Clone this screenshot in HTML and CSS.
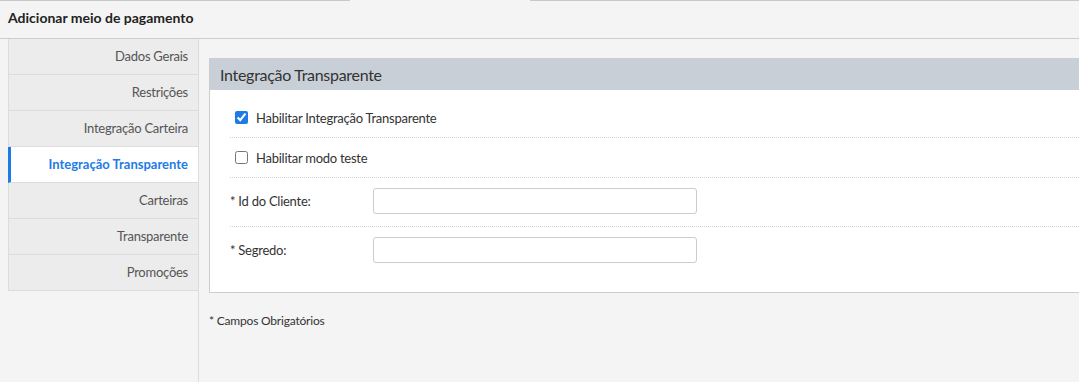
FILE: index.html
```html
<html>
    <head>
        <meta charset="utf-8" />
        <title>Adicionar meio de pagamento</title>
        <link rel="stylesheet" href="styles.css">
    </head>
    <body>
        <div class="topline">
            <span class="edge"></span>
            <span class="gap"></span>
            <span class="edge fill"></span>
        </div>
        <h1 class="page-title">Adicionar meio de pagamento</h1>

        <div class="layout">
            <div class="sidebar">
                <ul class="tabs">
                    <li>Dados Gerais</li>
                    <li>Restrições</li>
                    <li>Integração Carteira</li>
                    <li class="active">Integração Transparente</li>
                    <li>Carteiras</li>
                    <li>Transparente</li>
                    <li>Promoções</li>
                </ul>
            </div>

            <div class="content">
                <div class="panel">
                    <div class="panel-heading">Integração Transparente</div>
                    <div class="panel-body">
                        <label class="row check-row">
                            <input type="checkbox" checked>
                            <span>Habilitar Integração Transparente</span>
                        </label>
                        <label class="row check-row">
                            <input type="checkbox">
                            <span>Habilitar modo teste</span>
                        </label>
                        <div class="row field-row">
                            <span class="field-label">* Id do Cliente:</span>
                            <input type="text" class="field">
                        </div>
                        <div class="row field-row">
                            <span class="field-label">* Segredo:</span>
                            <input type="text" class="field">
                        </div>
                    </div>
                </div>
                <p class="note">* Campos Obrigatórios</p>
            </div>
        </div>
    </body>
</html>
```

FILE: styles.css
```css
html, body {
    margin: 0;
    padding: 0;
    background: #f4f4f4;
    font-family: Lato, "Open Sans", sans-serif;
    color: #333;
}

body {
    height: 100vh;
    display: flex;
    flex-direction: column;
    overflow: hidden;
}

.topline {
    display: flex;
    height: 1px;
}

.edge {
    width: 350px;
    border-top: 1px solid #c8c8c8;
}

.gap {
    width: 180px;
}

.fill {
    flex: 1;
}

.page-title {
    margin: 0;
    padding: 0 8px;
    height: 37px;
    line-height: 33px;
    font-size: 14px;
    font-weight: bold;
    color: #222;
    border-bottom: 1px solid #cdcdcd;
}

.layout {
    display: flex;
    flex: 1;
}

.sidebar {
    width: 190px;
    margin-left: 8px;
    border-right: 1px solid #dcdcdc;
}

.tabs {
    list-style: none;
    margin: 0;
    padding: 0;
}

.tabs li {
    height: 35px;
    line-height: 35px;
    padding-right: 10px;
    text-align: right;
    font-size: 13px;
    letter-spacing: -0.25px;
    color: #555;
    background: #ececec;
    border-left: 1px solid #dcdcdc;
    border-bottom: 1px solid #dcdcdc;
}

.tabs li.active {
    background: #fff;
    color: #1e7be6;
    font-weight: bold;
    letter-spacing: 0;
    border-left: 3px solid #1e7be6;
}

.content {
    flex: 1;
    padding: 19px 0 0 10px;
}

.panel {
    background: #fff;
    border: 1px solid #cdcdcd;
    border-right: none;
}

.panel-heading {
    height: 31px;
    line-height: 31px;
    padding-left: 10px;
    font-size: 16px;
    letter-spacing: -0.3px;
    color: #333;
    background: #c8cfd6;
}

.panel-body {
    padding: 8px 0 17px 20px;
}

.row {
    display: flex;
    align-items: center;
    border-bottom: 1px dotted #d0d0d0;
    font-size: 13px;
    letter-spacing: -0.25px;
}

.row:last-child {
    border-bottom: none;
}

.check-row {
    height: 39px;
    padding-left: 5px;
}

.check-row input {
    width: 13px;
    height: 13px;
    margin: 0 8px 0 0;
    accent-color: #1e7be6;
}

.field-row {
    height: 46px;
    padding-bottom: 2px;
}

.field-label {
    width: 143px;
}

.field {
    width: 324px;
    height: 26px;
    border: 1px solid #ccc;
    border-radius: 3px;
    box-sizing: border-box;
}

.note {
    margin: 20px 0 0;
    font-size: 12px;
    letter-spacing: -0.2px;
    color: #333;
}
```
